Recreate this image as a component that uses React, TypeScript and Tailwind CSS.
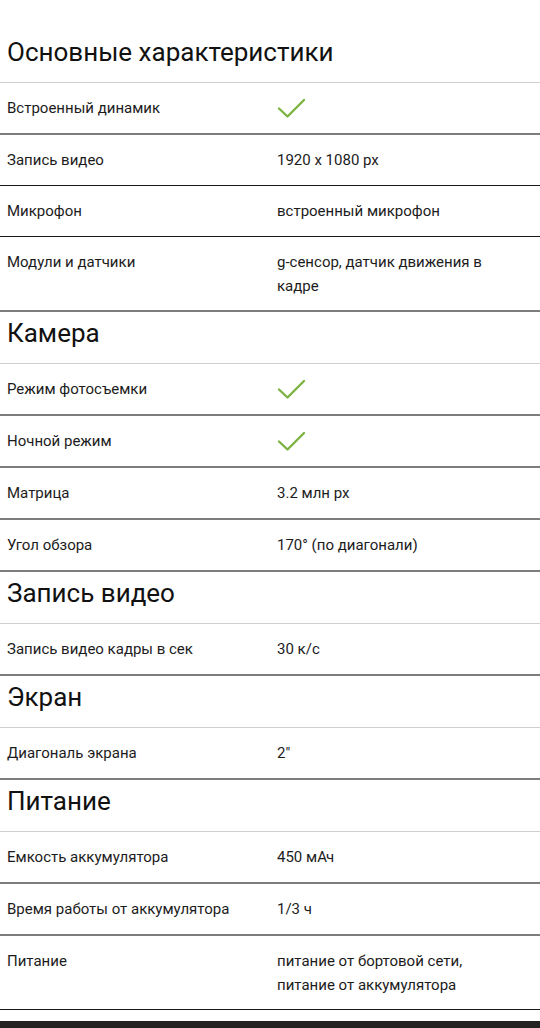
import React from 'react';

type Row = { label: string; value?: string; check?: boolean; thin?: boolean; multi?: boolean };
type Section = { title: string; rows: Row[] };

const sections: Section[] = [
  {
    title: 'Основные характеристики',
    rows: [
      { label: 'Встроенный динамик', check: true },
      { label: 'Запись видео', value: '1920 x 1080 px', thin: true },
      { label: 'Микрофон', value: 'встроенный микрофон', thin: true },
      { label: 'Модули и датчики', value: 'g-сенсор, датчик движения в кадре', multi: true },
    ],
  },
  {
    title: 'Камера',
    rows: [
      { label: 'Режим фотосъемки', check: true },
      { label: 'Ночной режим', check: true },
      { label: 'Матрица', value: '3.2 млн px' },
      { label: 'Угол обзора', value: '170° (по диагонали)' },
    ],
  },
  {
    title: 'Запись видео',
    rows: [{ label: 'Запись видео кадры в сек', value: '30 к/с' }],
  },
  {
    title: 'Экран',
    rows: [{ label: 'Диагональ экрана', value: '2"' }],
  },
  {
    title: 'Питание',
    rows: [
      { label: 'Емкость аккумулятора', value: '450 мАч' },
      { label: 'Время работы от аккумулятора', value: '1/3 ч' },
      { label: 'Питание', value: 'питание от бортовой сети, питание от аккумулятора', thin: true, multi: true },
    ],
  },
  {
    title: 'Прочее',
    rows: [{ label: 'Гарантия', value: '12 мес' }],
  },
];

function Check() {
  return (
    <svg width="30" height="24" viewBox="0 0 30 24" className="block">
      <polyline
        points="2,12.5 10.5,20.5 27,4"
        fill="none"
        stroke="#7cb342"
        strokeWidth="2.4"
        strokeLinecap="round"
        strokeLinejoin="round"
      />
    </svg>
  );
}

function rowClass(row: Row) {
  const pad = row.multi ? 'pt-[13px] pb-[12px]' : 'py-[13px]';
  const border = row.thin ? 'border-b border-[#1a1a1a]' : 'border-b-2 border-[#7d7d7d]';
  return `flex text-[15px] leading-6 ${pad} ${border}`;
}

export default function App() {
  return (
    <div className="min-h-screen bg-white pt-[31px] text-[#1c1c1c]" style={{ fontFamily: 'Roboto, "Noto Sans", Arial, sans-serif' }}>
      {sections.map((section) => (
        <div key={section.title}>
          <h2 className="pl-[7px] pt-[6px] pb-[15px] text-[26px] leading-[30px] font-normal text-[#111] border-b border-[#cfcfcf]">
            {section.title}
          </h2>
          {section.rows.map((row) => (
            <div key={row.label} className={rowClass(row)}>
              <div className="w-[277px] shrink-0 pl-[7px] pr-2">{row.label}</div>
              <div className="flex-1 pr-[50px]">
                {row.check ? <Check /> : row.value}
              </div>
            </div>
          ))}
        </div>
      ))}
      <div className="fixed bottom-0 left-0 right-0 h-[7px] bg-[#232323]" />
    </div>
  );
}
